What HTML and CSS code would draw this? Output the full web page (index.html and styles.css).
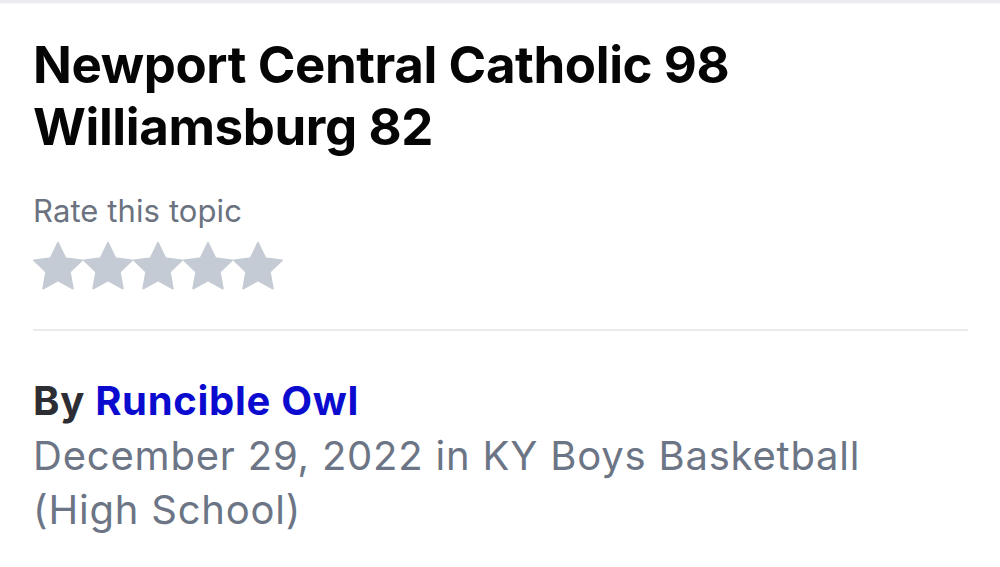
FILE: index.html
```html
<!DOCTYPE html>
<html lang="en">
<head>
    <meta charset="UTF-8">
    <meta name="viewport" content="width=device-width, initial-scale=1.0">
    <title>Newport Central Catholic 98 Williamsburg 82</title>
    <link rel="stylesheet" href="styles.css">
</head>
<body>
    <div class="top-bar"></div>

    <div class="topic">
        <h1 class="topic-title">Newport Central Catholic 98 Williamsburg 82</h1>

        <div class="rating">
            <div class="rating-label">Rate this topic</div>
            <div class="stars">
                <svg class="star" viewBox="0 0 24 24"><path d="M12 0.8L15.53 8.15L23.6 9.23L17.71 14.85L19.17 22.87L12 19L4.83 22.87L6.29 14.85L0.4 9.23L8.47 8.15Z"/></svg>
                <svg class="star" viewBox="0 0 24 24"><path d="M12 0.8L15.53 8.15L23.6 9.23L17.71 14.85L19.17 22.87L12 19L4.83 22.87L6.29 14.85L0.4 9.23L8.47 8.15Z"/></svg>
                <svg class="star" viewBox="0 0 24 24"><path d="M12 0.8L15.53 8.15L23.6 9.23L17.71 14.85L19.17 22.87L12 19L4.83 22.87L6.29 14.85L0.4 9.23L8.47 8.15Z"/></svg>
                <svg class="star" viewBox="0 0 24 24"><path d="M12 0.8L15.53 8.15L23.6 9.23L17.71 14.85L19.17 22.87L12 19L4.83 22.87L6.29 14.85L0.4 9.23L8.47 8.15Z"/></svg>
                <svg class="star" viewBox="0 0 24 24"><path d="M12 0.8L15.53 8.15L23.6 9.23L17.71 14.85L19.17 22.87L12 19L4.83 22.87L6.29 14.85L0.4 9.23L8.47 8.15Z"/></svg>
            </div>
        </div>

        <hr class="divider">

        <div class="author">
            <div class="author-name">By <a href="#" class="author-link">Runcible Owl</a></div>
            <div class="author-meta">December 29, 2022 in KY Boys Basketball (High School)</div>
        </div>
    </div>
</body>
</html>
```

FILE: styles.css
```css
body {
    margin: 0;
    padding: 0;
    background: #ffffff;
    font-family: Inter, "Noto Sans", Arial, sans-serif;
    color: #000;
}
.top-bar {
    height: 3px;
    background: #ebebf2;
    border-bottom: 1px solid #f5f5f8;
}
.topic {
    padding: 0 32px 0 33px;
}
.topic-title {
    margin: 0;
    padding-top: 30px;
    font-size: 51px;
    line-height: 62px;
    font-weight: 700;
    letter-spacing: -0.4px;
    color: #050505;
}
.rating {
    margin-top: 35px;
}
.rating-label {
    font-size: 31px;
    line-height: 36px;
    letter-spacing: 0.1px;
    color: #6b7280;
}
.stars {
    display: flex;
    margin-top: 12px;
}
.star {
    width: 50px;
    height: 50px;
    fill: #c5cbd4;
    stroke: #c5cbd4;
    stroke-width: 0.8;
    stroke-linejoin: round;
}
.divider {
    border: 0;
    border-top: 2px solid #ebebeb;
    margin: 38px 0 0 0;
}
.author {
    margin-top: 46px;
}
.author-name {
    font-size: 40px;
    line-height: 48px;
    font-weight: 700;
    letter-spacing: 0.7px;
    color: #2c2e33;
}
.author-link {
    color: #0b0bd0;
    text-decoration: none;
}
.author-meta {
    margin-top: 4px;
    font-size: 40px;
    line-height: 54px;
    letter-spacing: 0.8px;
    color: #6c7585;
    max-width: 880px;
}
```
